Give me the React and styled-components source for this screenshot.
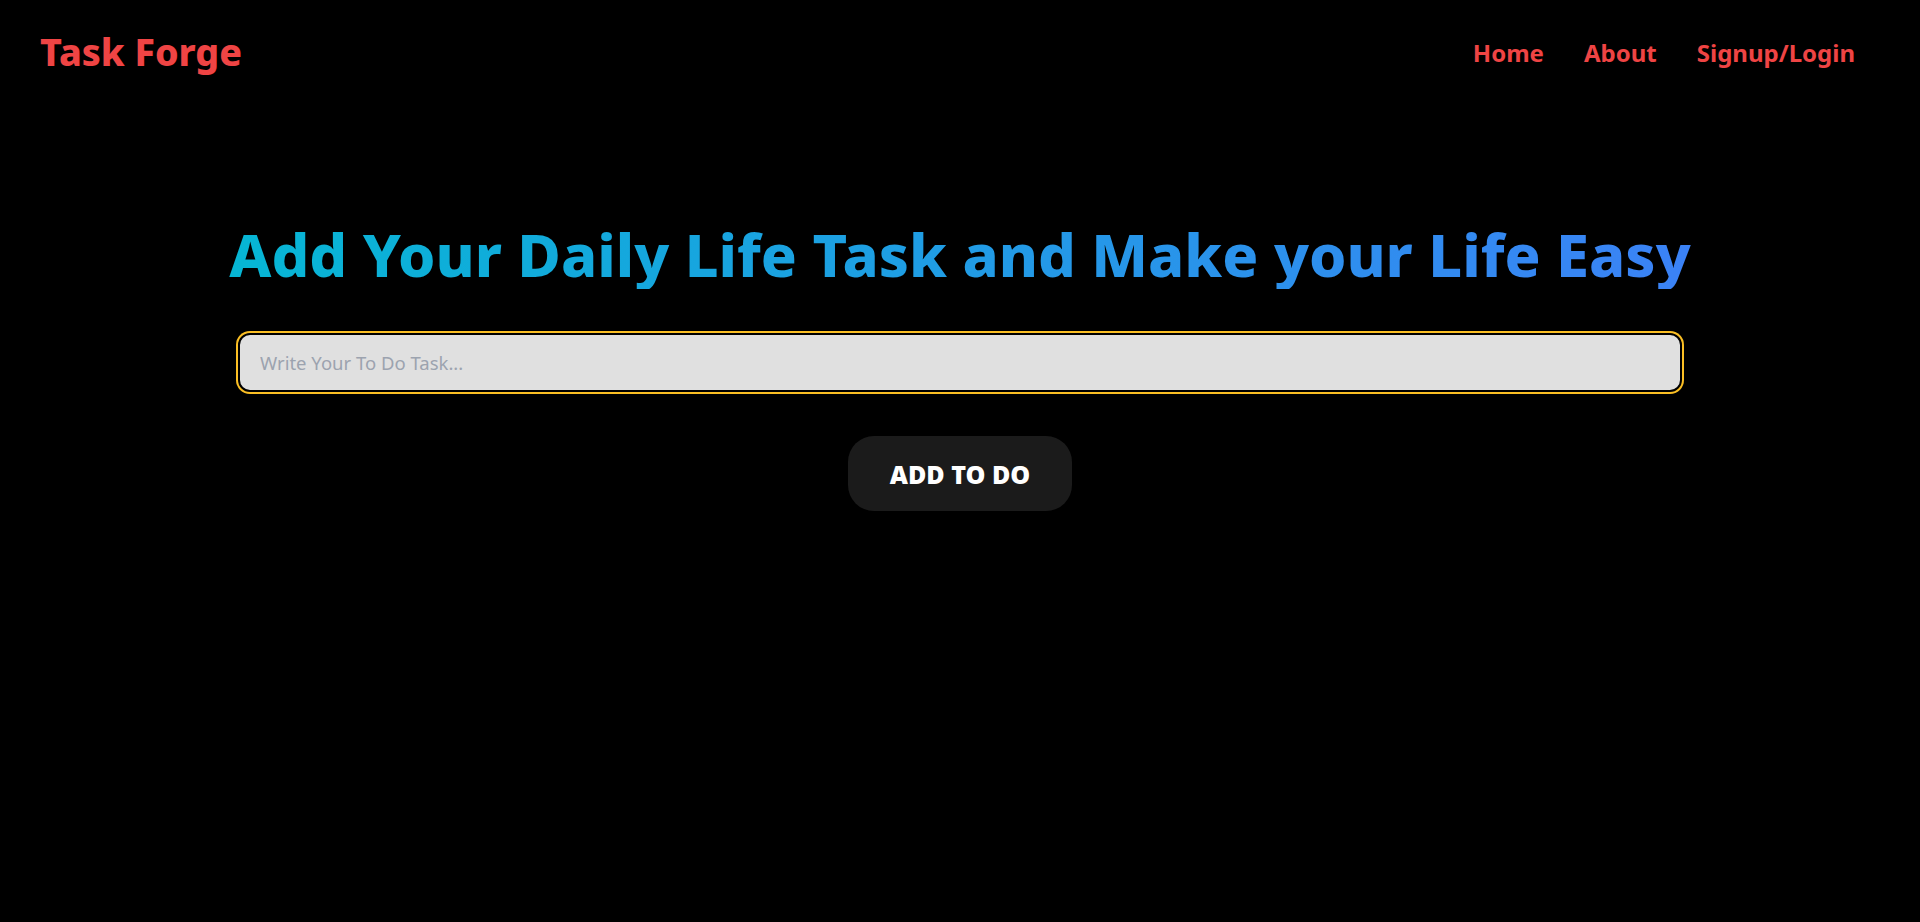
import React, { useState } from "react";
import styled, { createGlobalStyle } from "styled-components";

const Global = createGlobalStyle`
  html, body { margin: 0; padding: 0; background: #000; }
  body { font-family: "Noto Sans", "Open Sans", sans-serif; }
  * { box-sizing: border-box; }
`;

const Page = styled.div`
  min-height: 100vh;
  background: #000;
  color: #fff;
`;

const NavBar = styled.nav`
  display: flex;
  justify-content: space-between;
  align-items: center;
  height: 104px;
  padding: 0 65px 0 40px;
`;

const Brand = styled.div`
  color: #ef4444;
  font-weight: 800;
  font-size: 37.5px;
  line-height: 1;
`;

const NavLinks = styled.ul`
  display: flex;
  gap: 40px;
  list-style: none;
  margin: 0;
  padding: 0;
`;

const NavLink = styled.a`
  color: #ef4444;
  font-weight: 700;
  font-size: 24px;
  text-decoration: none;
  cursor: pointer;
`;

const Main = styled.main`
  display: flex;
  flex-direction: column;
  align-items: center;
  padding-top: 114px;
`;

const Heading = styled.h1`
  margin: 0;
  font-size: 59.5px;
  font-weight: 800;
  line-height: 1.2;
  background: linear-gradient(90deg, #06b6d4, #3b82f6);
  -webkit-background-clip: text;
  background-clip: text;
  color: transparent;
`;

const Form = styled.div`
  display: flex;
  flex-direction: column;
  align-items: center;
  width: 1444px;
  margin-top: 44px;
  gap: 44px;
`;

const TaskInput = styled.input`
  width: 100%;
  height: 59px;
  border-radius: 12px;
  border: 2px solid #000;
  background: #e0e0e0;
  outline: none;
  box-shadow: 0 0 0 2px #fbbf24;
  padding: 0 20px;
  font-family: "Noto Sans", sans-serif;
  font-size: 18.5px;
  color: #111;
  &::placeholder { color: #9ca3af; }
`;

const AddButton = styled.button`
  width: 224px;
  height: 75px;
  border: none;
  border-radius: 26px;
  background: #1b1b1b;
  color: #fff;
  font-family: "Noto Sans", sans-serif;
  font-weight: 900;
  font-size: 25px;
  text-transform: uppercase;
  cursor: pointer;
`;

export default function App() {
  const [task, setTask] = useState("");
  return (
    <Page>
      <Global />
      <NavBar>
        <Brand>Task Forge</Brand>
        <NavLinks>
          <li><NavLink>Home</NavLink></li>
          <li><NavLink>About</NavLink></li>
          <li><NavLink>Signup/Login</NavLink></li>
        </NavLinks>
      </NavBar>
      <Main>
        <Heading>Add Your Daily Life Task and Make your Life Easy</Heading>
        <Form>
          <TaskInput
            placeholder="Write Your To Do Task..."
            value={task}
            onChange={(e) => setTask(e.target.value)}
          />
          <AddButton>Add To Do</AddButton>
        </Form>
      </Main>
    </Page>
  );
}
